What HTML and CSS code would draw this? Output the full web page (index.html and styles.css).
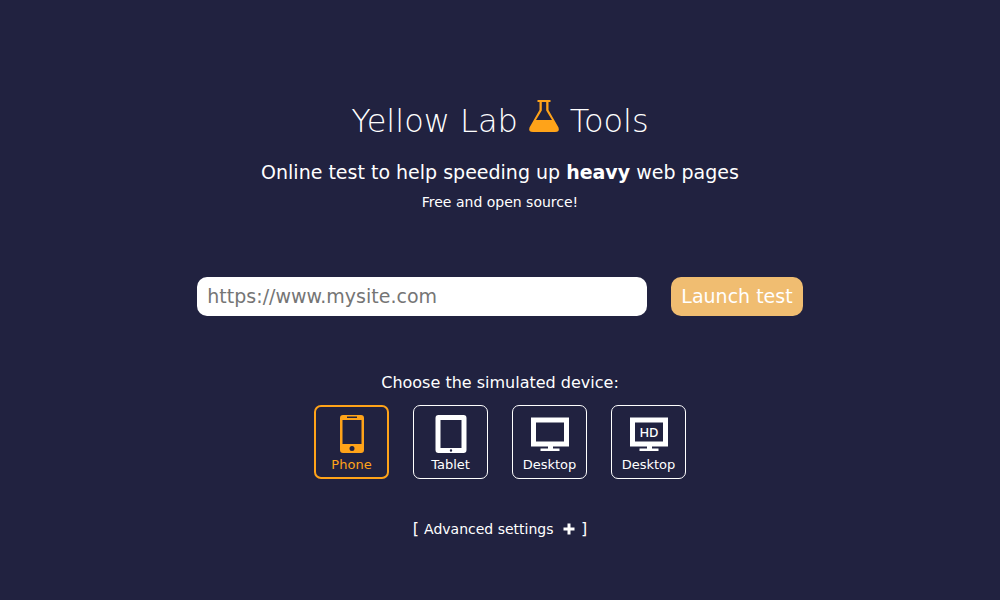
FILE: index.html
```
<!DOCTYPE html>
<html lang="en">
<head>
    <meta charset="UTF-8">
    <meta name="viewport" content="width=device-width, initial-scale=1.0">
    <title>Yellow Lab Tools</title>
    <link rel="stylesheet" href="styles.css">
</head>
<body>
    <main class="home">
        <h1 class="logo">
            <span>Yellow Lab</span>
            <svg class="flask" viewBox="0 0 32 34" aria-hidden="true">
                <path fill="currentColor" fill-rule="evenodd" d="M9.500 1h13v2h-2v8l10 17.500Q32 33 27 33H5Q0 33 1.500 28.500L11.500 11V3h-2zM13.800 3v8.500L8 21h16l-5.800-9.500V3z"/>
            </svg>
            <span>Tools</span>
        </h1>
        <h2 class="tagline">Online test to help speeding up <strong>heavy</strong> web pages</h2>
        <p class="free">Free and open source!</p>

        <form onsubmit="return false">
            <div class="launch">
                <input class="url" type="text" placeholder="https://www.mysite.com" aria-label="Page URL">
                <button class="launch-btn" type="submit">Launch test</button>
            </div>

            <fieldset class="devices">
                <legend>Choose the simulated device:</legend>
                <div class="device-list">
                    <label class="device">
                        <input type="radio" name="device" value="phone" checked>
                        <svg viewBox="0 0 40 40" aria-hidden="true">
                            <path fill="currentColor" fill-rule="evenodd" d="M11 1h18q3 0 3 3v32q0 3-3 3H11q-3 0-3-3V4q0-3 3-3zM10.500 6v24h19V6zM15 2.500v1.500h10V2.500zM20 32a2.500 2.500 0 1 0 0 5a2.500 2.500 0 1 0 0-5z"/>
                        </svg>
                        <span>Phone</span>
                    </label>
                    <label class="device">
                        <input type="radio" name="device" value="tablet">
                        <svg viewBox="0 0 40 40" aria-hidden="true">
                            <path fill="currentColor" fill-rule="evenodd" d="M7.500 1h25q3 0 3 3v32q0 3-3 3h-25q-3 0-3-3V4q0-3 3-3zM9.500 6v28h21V6zM20 35.300a1.200 1.200 0 1 0 0 2.400a1.200 1.200 0 1 0 0-2.400z"/>
                        </svg>
                        <span>Tablet</span>
                    </label>
                    <label class="device">
                        <input type="radio" name="device" value="desktop">
                        <svg viewBox="0 0 40 40" aria-hidden="true">
                            <path fill="currentColor" fill-rule="evenodd" d="M1 3.500h38v29H23v2h6.500V37h-19v-2.500H18v-2H1zM6 8.500v19h28v-19z"/>
                        </svg>
                        <span>Desktop</span>
                    </label>
                    <label class="device">
                        <input type="radio" name="device" value="desktop-hd">
                        <svg viewBox="0 0 40 40" aria-hidden="true">
                            <path fill="currentColor" fill-rule="evenodd" d="M1 3.500h38v29H23v2h6.500V37h-19v-2.500H18v-2H1zM6 8.500v19h28v-19z"/>
                            <text class="hd" x="20" y="23" text-anchor="middle">HD</text>
                        </svg>
                        <span>Desktop</span>
                    </label>
                </div>
            </fieldset>

            <p class="settings">[ <a href="#settings">Advanced settings
                <svg class="plus" viewBox="0 0 12 12" aria-hidden="true"><path fill="currentColor" d="M4.500 0.500h3v4h4v3h-4v4h-3v-4h-4v-3h4z"/></svg></a> ]</p>
        </form>
    </main>
</body>
</html>
```
FILE: styles.css
```
body {
    margin: 0;
    background: #212240;
    color: #fff;
    font-family: "DejaVu Sans", sans-serif;
    font-size: 16px;
    text-align: center;
}
.home {
    padding: 98px 20px 40px;
}

.logo {
    display: flex;
    justify-content: center;
    align-items: flex-start;
    gap: 10px;
    margin: 0;
    font-size: 32px;
    font-weight: 200;
    line-height: 46px;
}
.flask {
    width: 32px;
    height: 36px;
    color: #ffa319;
}
.tagline {
    margin: 14px 0 0;
    font-size: 19px;
    font-weight: normal;
    line-height: 28px;
}
.free {
    margin: 6px 0 0;
    font-size: 14px;
    line-height: 20px;
}

.launch {
    display: flex;
    justify-content: center;
    gap: 24px;
    margin-top: 65px;
}
.url, .launch-btn {
    box-sizing: border-box;
    height: 39px;
    padding: 0 10px 2px;
    border: 0;
    border-radius: 10px;
    font-family: inherit;
    font-size: 19px;
}
.url {
    width: 450px;
    background: #fff;
}
.url::placeholder {
    color: #757575;
}
.launch-btn {
    background: #f0bd71;
    color: #fff;
    cursor: pointer;
}

.devices {
    margin: 56px 0 0;
    padding: 0;
    border: 0;
}
.devices legend {
    width: 100%;
    padding: 0;
    line-height: 22px;
}
.device-list {
    display: flex;
    justify-content: center;
    gap: 24px;
    margin-top: 11px;
}
.device {
    box-sizing: border-box;
    display: flex;
    flex-direction: column;
    align-items: center;
    width: 75px;
    height: 74px;
    padding-top: 8px;
    border: 1px solid #fff;
    border-radius: 7px;
    font-size: 13px;
    line-height: 22px;
    cursor: pointer;
}
.device:has(input:checked) {
    padding-top: 7px;
    border: 2px solid #ffa319;
    color: #ffa319;
}
.device input {
    position: absolute;
    opacity: 0;
    pointer-events: none;
}
.device svg {
    width: 40px;
    height: 40px;
}
.hd {
    fill: currentColor;
    font-family: "Noto Sans", sans-serif;
    font-size: 13px;
    font-weight: 500;
}

.settings {
    margin: 40px 0 0;
    font-size: 16px;
    line-height: 20px;
}
.settings a {
    color: inherit;
    font-size: 14px;
    text-decoration: none;
}
.plus {
    width: 12px;
    height: 12px;
    margin: 0 1px 0 5px;
    vertical-align: -1px;
}
```
